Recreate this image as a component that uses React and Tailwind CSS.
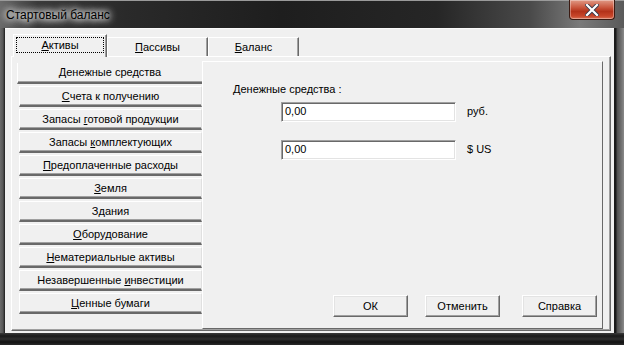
import React from "react";

const F = { fontFamily: '"Liberation Sans", Arial, sans-serif' };

function U({ children }) {
  return <span className="underline underline-offset-[1px]">{children}</span>;
}

const items = [
  [<><U>Д</U>енежные средства</>],
  [<><U>С</U>чета к получению</>],
  [<>Запасы <U>г</U>отовой продукции</>],
  [<>Запасы <U>к</U>омплектующих</>],
  [<><U>П</U>редоплаченные расходы</>],
  [<><U>З</U>емля</>],
  [<>З<U>д</U>ания</>],
  [<><U>О</U>борудование</>],
  [<><U>Н</U>ематериальные активы</>],
  [<>Незавершенные <U>и</U>нвестиции</>],
  [<><U>Ц</U>енные бумаги</>],
];

function WinButton({ children, className = "" }) {
  return (
    <div
      className={
        "h-[22px] flex items-center justify-center bg-[#f0f0f0] border border-t-white border-l-white border-r-[#696969] border-b-[#696969] shadow-[inset_-1px_-1px_0_#a0a0a0,inset_1px_1px_0_#e3e3e3] text-[11px] text-black " +
        className
      }
    >
      {children}
    </div>
  );
}

function Field({ unit }) {
  return (
    <div className="flex items-center">
      <div className="w-[175px] h-[20px] bg-white border border-t-[#a0a0a0] border-l-[#a0a0a0] border-r-white border-b-white shadow-[inset_1px_1px_0_#696969,inset_-1px_-1px_0_#e3e3e3] flex items-center pl-[3px] text-[11px] text-black">
        0,00
      </div>
      <span className="ml-[11px] text-[11px] text-black">{unit}</span>
    </div>
  );
}

export default function App() {
  return (
    <div
      style={F}
      className="w-[624px] h-[345px] flex flex-col bg-[#2a2a2a] overflow-hidden"
    >
      {/* Title bar */}
      <div className="h-[28px] shrink-0 relative flex items-center bg-[linear-gradient(90deg,#6a6a6a_0%,#3a3a3a_6%,#2a2a2a_20%,#1e1e1e_45%,#262626_70%,#4a4a4a_85%,#7a7a7a_93%,#5a5a5a_100%)]">
        <div className="absolute inset-x-0 top-0 h-[1px] bg-[#9a9a9a]" />
        <span className="ml-[6px] mt-[2px] text-[12px] text-black [text-shadow:0_0_6px_#fff,0_0_8px_#fff,0_0_10px_#fff]">
          Стартовый баланс
        </span>
        <div className="absolute right-[9px] top-0 w-[46px] h-[20px] rounded-b-[4px] border border-t-0 border-[#3a1a12] bg-[linear-gradient(180deg,#e09a86_0%,#c9553c_40%,#b3321a_60%,#c8462a_85%,#d77256_100%)] flex items-center justify-center shadow-[inset_0_0_0_1px_rgba(255,255,255,0.35)]">
          <svg width="14" height="12" viewBox="0 0 14 12">
            <path
              d="M2 1 L12 11 M12 1 L2 11"
              stroke="#3a3a4a"
              strokeWidth="4"
              strokeLinecap="square"
            />
            <path
              d="M2 1 L12 11 M12 1 L2 11"
              stroke="#ffffff"
              strokeWidth="2.2"
              strokeLinecap="square"
            />
          </svg>
        </div>
      </div>

      {/* Body */}
      <div className="flex flex-1 min-h-0">
        <div className="w-[5px] shrink-0 bg-[linear-gradient(90deg,#6a6a6a,#555555_60%,#1a1a1a)]" />
        <div className="flex-1 flex flex-col bg-[#f0f0f0] border-t border-t-[#fafafa] pb-[2px] pr-[3px]">
          {/* Tabs */}
          <div className="h-[27px] shrink-0 flex items-end pl-[8px] text-[11px] text-black">
            <div className="relative z-10 -mb-[1px] h-[23px] w-[94px] bg-[#f0f0f0] border-t border-l border-t-white border-l-white border-r border-r-[#696969] shadow-[inset_-1px_0_0_#a0a0a0] flex items-start justify-center pt-[2px] px-[2px]">
              <div className="w-full h-[16px] border border-dotted border-black flex items-center justify-center">
                <U>А</U>ктивы
              </div>
            </div>
            <div className="h-[19px] w-[101px] border-t border-l border-t-white border-l-white border-r border-r-[#696969] shadow-[inset_-1px_0_0_#a0a0a0] flex items-center justify-center">
              <span><U>П</U>ассивы</span>
            </div>
            <div className="h-[19px] w-[91px] border-t border-l border-t-white border-l-white border-r border-r-[#696969] shadow-[inset_-1px_0_0_#a0a0a0] flex items-center justify-center">
              <span><U>Б</U>аланс</span>
            </div>
          </div>

          {/* Pane */}
          <div className="flex-1 ml-[6px] flex border border-t-white border-l-white border-r-[#696969] border-b-[#696969] shadow-[inset_-1px_-1px_0_#a0a0a0] pl-[5px] pt-[4px] pr-[7px] pb-[1px]">
            {/* Left list */}
            <div className="w-[185px] shrink-0 flex flex-col pt-[2px] text-[11px] text-black">
              {items.map((it, i) => (
                <div
                  key={i}
                  className={
                    "h-[21px] mb-[2px] flex items-center justify-center bg-[#f0f0f0] border-b-2 border-b-[#696969] shadow-[inset_0_-1px_0_#a0a0a0] " +
                    (i === 0
                      ? "border-l border-l-white"
                      : "ml-[2px] border-t border-l border-r border-t-white border-l-white border-r-[#e0e0e0]")
                  }
                >
                  <span>{it[0]}</span>
                </div>
              ))}
            </div>
            {/* Right panel */}
            <div className="flex-1 flex flex-col border border-t-white border-l-white border-r-[#696969] border-b-[#696969] text-[11px] text-black">
              <div className="ml-[30px] mt-[19px]">Денежные средства :</div>
              <div className="ml-[78px] mt-[4px]">
                <Field unit="руб." />
              </div>
              <div className="ml-[78px] mt-[18px]">
                <Field unit="$ US" />
              </div>
              <div className="mt-auto mb-[11px] flex">
                <WinButton className="ml-[130px] w-[75px]">ОК</WinButton>
                <WinButton className="ml-[17px] w-[75px]">Отменить</WinButton>
                <WinButton className="ml-[22px] w-[75px]">Справка</WinButton>
              </div>
            </div>
          </div>
        </div>
        <div className="w-[10px] shrink-0 bg-[linear-gradient(90deg,#1a1a1a_0%,#1a1a1a_20%,#4e4e4e_30%,#6e6e6e_70%,#8a8a8a_100%)]" />
      </div>

      {/* Bottom frame */}
      <div className="h-[12px] shrink-0 bg-[linear-gradient(180deg,#3a3a3a_0%,#1a1a1a_25%,#2e2e2e_50%,#121212_75%,#2a2a2a_100%)]" />
    </div>
  );
}
